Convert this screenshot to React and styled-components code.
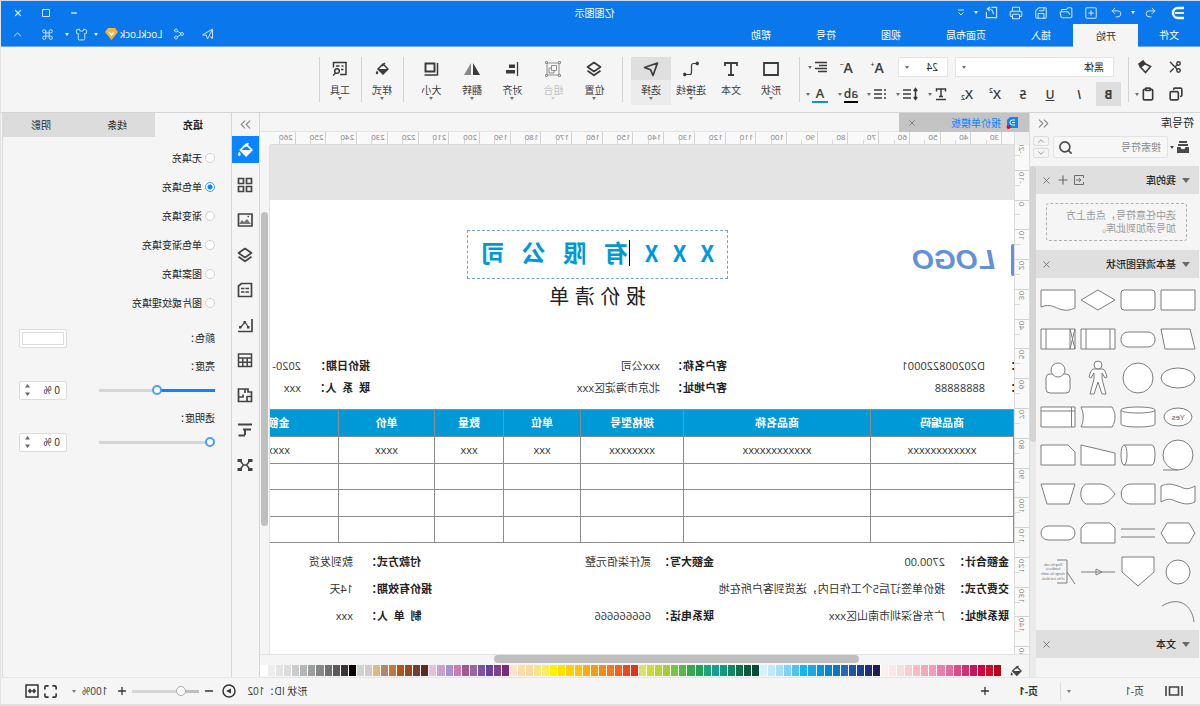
import React, { useState } from "react";
import styled, { createGlobalStyle, css } from "styled-components";
import {
  Undo2,
  Redo2,
  SquarePlus,
  FolderOpen,
  Save,
  Printer,
  Scissors,
  Copy,
  Clipboard,
  Search,
  ChevronUp,
  ChevronDown,
  ChevronsLeft,
  ChevronsRight,
  Shirt,
  Command,
  Plus,
  Minus,
  X,
  Maximize,
  Share2,
} from "lucide-react";

const GlobalStyle = createGlobalStyle`
  * {
    box-sizing: border-box;
  }
  body {
    margin: 0;
    background: #fff;
    color: #222;
    font-family: "Open Sans", "Noto Sans CJK SC", sans-serif;
    font-size: 10px;
    line-height: 12px;
  }
  button, input, select {
    font: inherit;
    color: inherit;
    margin: 0;
  }
  button {
    padding: 0;
    border: 0;
    background: none;
    display: flex;
    align-items: center;
    justify-content: center;
  }
  svg {
    display: block;
    flex: none;
  }
`;

// the whole window is shown flipped left to right
const Window = styled.div`
  transform: scaleX(-1);
  display: flex;
  flex-direction: column;
  height: 100vh;
  min-height: 640px;
  overflow: hidden;
  border-top: 1px solid #c9dcf3;
  border-right: 1px solid #e4e4e4;
  background: #f5f5f5;
`;

const Header = styled.header`
  background: #0a78ec;
  color: #fff;
  border-bottom: 1px solid #6aa9ee;
`;
const TitleBar = styled.div`
  display: grid;
  grid-template-columns: 1fr auto 1fr;
  align-items: center;
  height: 23px;
  padding: 0 3px 0 15px;
  svg {
    color: #cfe5ff;
  }
`;
const QuickTools = styled.div`
  display: flex;
  align-items: center;
  > svg {
    margin-right: 6px;
  }
`;
const WindowTools = styled.div`
  display: flex;
  justify-content: flex-end;
`;
const Cell = styled.button`
  width: ${(p) => p.$w || 25}px;
  height: 20px;
`;
const CaretCell = styled.button`
  width: ${(p) => p.$w || 9}px;
  height: 20px;
`;
const Title = styled.h1`
  margin: 0;
  font-size: 10px;
  font-weight: 400;
`;
const MenuBar = styled.nav`
  display: flex;
  align-items: stretch;
  height: 22px;
  padding-right: 3px;
  svg {
    color: #cfe5ff;
  }
`;
const MenuTab = styled.button`
  padding: 0 23px 0 22px;
  &:first-child {
    padding: 0 21px;
  }
  ${(p) =>
    p.$active &&
    css`
      background: #f5f5f5;
      color: #333;
      margin-bottom: -1px;
    `}
`;
const MenuTools = styled.div`
  display: flex;
  align-items: center;
  margin-left: auto;
  padding-bottom: 2px;
`;
const UserName = styled.button`
  gap: 2px;
  margin: 0 4px 0 2px;
`;

const Caret = styled.i`
  flex: none;
  border: ${(p) => p.$size || 2}px solid transparent;
  border-top: ${(p) => (p.$size || 2) + 1}px solid currentColor;
  border-bottom: 0;
`;

const Ribbon = styled.div`
  display: flex;
  height: 66px;
  padding: 8px 0 0 10px;
  border-bottom: 1px solid #d4d4d4;
  color: #3b3b3b;
  ${Caret} {
    color: #6e6e6e;
  }
`;
const Divider = styled.span`
  width: 1px;
  height: 45px;
  margin: 2px ${(p) => p.$right || 0}px 0 ${(p) => p.$left || 0}px;
  background: #d2d2d2;
`;
const ToolGrid = styled.div`
  display: flex;
  flex-direction: column;
  gap: 3px;
  padding-left: ${(p) => p.$left || 0}px;
`;
const ToolRow = styled.div`
  display: flex;
  align-items: center;
  height: 24px;
`;
const Tool = styled.button`
  width: ${(p) => p.$w || 28}px;
  height: 24px;
  gap: 2px;
  ${(p) =>
    p.$active &&
    css`
      background: #dedede;
    `}
`;
const Field = styled.label`
  display: flex;
  align-items: center;
  position: relative;
  width: ${(p) => p.$w}px;
  height: 20px;
  margin-left: 7px;
  background: #fff;
  border: 1px solid #e4e4e4;
  select {
    appearance: none;
    width: 100%;
    height: 18px;
    padding: 0 16px 0 ${(p) => p.$indent}px;
    border: 0;
    background: none;
    color: #222;
  }
  ${Caret} {
    position: absolute;
    right: 6px;
  }
`;
const BigTools = styled.div`
  display: flex;
  padding: 2px 0 0 ${(p) => p.$left || 0}px;
`;
const BigTool = styled.button`
  flex-direction: column;
  justify-content: flex-start;
  width: ${(p) => p.$w || 40}px;
  height: 48px;
  color: ${(p) => (p.$off ? "#c2c2c2" : "inherit")};
  background: ${(p) => (p.$active ? "#ececec" : "none")};
  span {
    display: flex;
    align-items: center;
    justify-content: center;
    width: 100%;
    height: 23px;
    margin-bottom: 4px;
    background: ${(p) => (p.$active ? "#dfdfdf" : "none")};
  }
  ${Caret} {
    margin-top: 1px;
    ${(p) => p.$off && "color: #cfcfcf;"}
  }
`;

const Body = styled.div`
  display: flex;
  flex: 1;
  min-height: 0;
  padding-left: 1px;
`;

/* symbol library */
const Library = styled.aside`
  display: flex;
  flex-direction: column;
  width: 170px;
  flex: none;
  overflow: hidden;
  border-right: 1px solid #dcdcdc;
`;
const LibraryTitle = styled.div`
  display: flex;
  align-items: center;
  justify-content: space-between;
  height: 20px;
  padding: 0 5px;
  font-size: 11px;
  svg {
    color: #8a8a8a;
  }
`;
const SearchRow = styled.div`
  display: flex;
  align-items: center;
  height: 22px;
  margin: 3px 3px 8px 9px;
  color: #4a4a4a;
  > ${Caret} {
    margin-left: 2px;
  }
`;
const SearchBox = styled.label`
  display: flex;
  align-items: center;
  flex: 1;
  min-width: 0;
  height: 22px;
  margin: 0 4px 0 2px;
  padding: 0 4px 0 6px;
  border: 1px solid #e2e2e2;
  border-radius: 2px;
  background: #f7f7f7;
  input {
    flex: 1;
    min-width: 0;
    border: 0;
    padding: 0;
    background: none;
    outline: 0;
    &::placeholder {
      color: #8a8a8a;
    }
  }
  svg {
    transform: scaleX(-1);
  }
`;
const Stepper = styled.div`
  display: flex;
  flex-direction: column;
  gap: 2px;
  color: #888;
  button {
    width: 16px;
    height: 10px;
    border: 1px solid #dcdcdc;
    border-radius: 2px;
  }
`;
const LibraryBody = styled.div`
  display: flex;
  flex: 1;
  min-height: 0;
`;
const LibraryList = styled.div`
  display: flex;
  flex-direction: column;
  flex: 1;
`;
const SectionHead = styled.h2`
  display: flex;
  align-items: center;
  gap: 6px;
  flex: none;
  height: 28px;
  margin: 0;
  padding: 0 5px 0 9px;
  background: #dfdfdf;
  color: #222;
  font-size: 10px;
  font-weight: 500;
  svg,
  ${Caret} {
    color: #6a6a6a;
  }
  div {
    display: flex;
    gap: 4px;
    margin-left: auto;
  }
`;
const DropHint = styled.p`
  margin: 9px 10px 9px 12px;
  padding: 5px 10px;
  height: 38px;
  border: 1px dashed #b0b0b0;
  border-radius: 3px;
  color: #999;
  line-height: 13px;
`;
const ShapeGrid = styled.div`
  display: grid;
  grid-template-columns: repeat(4, 1fr);
  grid-template-rows: repeat(9, 1fr);
  flex: 1;
  min-height: 0;
  padding: 3px 2px 0 1px;
`;
const ShapeButton = styled.button`
  min-height: 0;
  svg {
    fill: #fff;
    stroke: #7d7d7d;
    overflow: visible;
  }
  text {
    fill: #555;
    stroke: none;
  }
`;
const ScrollTrack = styled.div`
  flex: none;
  width: 6px;
  background: #ebebeb;
  div {
    height: 54%;
    background: #d4d4d4;
    border-radius: 3px;
  }
`;
const Rest = styled.div`
  flex: none;
  height: 19px;
`;

/* canvas */
const Workspace = styled.main`
  display: flex;
  flex-direction: column;
  flex: 1;
  min-width: 0;
`;
const TabRow = styled.div`
  display: flex;
  height: 19px;
  border-bottom: 1px solid #e2e2e2;
`;
const DocTab = styled.button`
  gap: 5px;
  width: 130px;
  height: 19px;
  padding: 0 8px 0 10px;
  background: #c4c4c4;
  color: #0a84ff;
  justify-content: flex-start;
  svg:last-child {
    margin-left: auto;
    color: #777;
  }
`;
const RulerRow = styled.div`
  display: flex;
  height: 13px;
  padding-right: 10px;
  background: #f9f9f9;
`;
const Corner = styled.div`
  flex: none;
  width: 15px;
  background: #f1f1f1;
  border-right: 1px solid #e0e0e0;
`;
const HRuler = styled.div`
  flex: 1;
  overflow: hidden;
  border-bottom: 1px solid #dcdcdc;
  > div {
    display: grid;
    grid-template-columns: repeat(24, 1fr);
    height: 13px;
    margin: 0 -5px 0 12px;
  }
  span {
    padding-left: 2px;
    border-left: 1px solid #d2d2d2;
    background: linear-gradient(#d8d8d8, #d8d8d8) 50% 100% / 1px 5px no-repeat;
    color: #808080;
    font-size: 8px;
    line-height: 10px;
  }
`;
const CanvasRow = styled.div`
  display: flex;
  flex: 1;
  min-height: 0;
`;
const VRuler = styled.div`
  flex: none;
  width: 15px;
  overflow: hidden;
  background: #f9f9f9;
  border-right: 1px solid #dcdcdc;
  > div {
    display: grid;
    grid-template-rows: repeat(18, 1fr);
    height: calc(100% + 27px);
    margin-top: -5px;
  }
  span {
    display: flex;
    min-height: 0;
    padding-left: 2px;
    border-top: 1px solid #d2d2d2;
    background: linear-gradient(#d8d8d8, #d8d8d8) 100% 50% / 5px 1px no-repeat;
    color: #808080;
    font-size: 8px;
    line-height: 10px;
  }
  b {
    align-self: flex-start;
    padding-bottom: 1px;
    font-weight: 400;
    writing-mode: vertical-rl;
    transform: rotate(180deg);
  }
`;
const Canvas = styled.div`
  flex: 1;
  min-width: 0;
  overflow: hidden;
  padding-top: 55px;
  background: #e4e4e4;
`;
const VScroll = styled.div`
  flex: none;
  width: 10px;
  padding: 67px 1px 0;
  border-left: 1px solid #e2e2e2;
  div {
    height: 71%;
    border-radius: 4px;
    background: #bfbfbf;
  }
`;
const HScroll = styled.div`
  flex: none;
  height: 10px;
  padding-left: 170px;
  border-top: 1px solid #e2e2e2;
  div {
    width: 61%;
    height: 8px;
    border-radius: 4px;
    background: #bfbfbf;
  }
`;
const PaletteRow = styled.div`
  display: flex;
  align-items: center;
  height: 13px;
  padding-left: 7px;
  color: #444;
`;
const Palette = styled.div`
  display: grid;
  grid-template-columns: repeat(92, 1fr);
  flex: 1;
  height: 11px;
  margin-left: 8px;
`;
const Swatch = styled.button`
  background: ${(p) => p.$c};
  border-left: 1px solid #fff;
`;

/* quotation sheet */
const Sheet = styled.article`
  width: 900px;
  min-height: 100%;
  margin-left: -46px;
  padding-top: 30px;
  background: #fff;
  font-size: 11px;
  line-height: 16px;
`;
const SheetHead = styled.div`
  display: flex;
  align-items: flex-start;
`;
const Brand = styled.div`
  display: flex;
  align-items: center;
  gap: 16px;
  width: 332px;
  height: 32px;
  margin-top: 14px;
  padding-left: 10px;
  color: #6490d8;
  font: italic bold 28px/36px "Liberation Sans", sans-serif;
`;
const BrandMark = styled.span`
  width: 39px;
  height: 32px;
  border-radius: 2px;
  background: #6490d8;
`;
const TitleBlock = styled.div`
  display: flex;
  flex-direction: column;
  align-items: center;
`;
const CompanyName = styled.div`
  display: flex;
  align-items: center;
  justify-content: center;
  gap: 17px;
  width: 261px;
  height: 49px;
  padding-bottom: 6px;
  border: 1px dashed #6fa3dc;
  color: #0099d8;
  font: bold 24px/26px "Noto Sans CJK SC", sans-serif;
  div {
    display: flex;
    gap: 14px;
    font-size: 22px;
  }
`;
const HanChars = styled.div`
  && {
    position: relative;
    gap: 17px;
    font-size: 24px;
  }
  &::before {
    content: "";
    position: absolute;
    left: -2px;
    top: 1px;
    width: 1px;
    height: 26px;
    background: #000;
  }
`;
const SheetTitle = styled.h2`
  margin: 6px 0 0;
  font: 400 20px/24px "Liberation Sans", "Noto Sans CJK SC", sans-serif;
`;
const InfoGrid = styled.dl`
  display: grid;
  grid-template-columns: ${(p) => p.$cols};
  grid-auto-rows: ${(p) => p.$row}px;
  align-items: center;
  margin: ${(p) => p.$top}px 0 0;
  padding-left: ${(p) => p.$left}px;
  white-space: pre;
  dt {
    font-weight: 700;
  }
  dd {
    margin: 0;
    color: #333;
  }
  dt:nth-of-type(3n) {
    ${(p) => p.$end && "text-align: right; padding-right: 13px;"}
  }
`;
const Items = styled.table`
  width: 841px;
  margin-top: 10px;
  border-collapse: collapse;
  table-layout: fixed;
  text-align: center;
  th,
  td {
    height: 27px;
    padding: 0;
    border: 1px solid #8c8c8c;
    color: #333;
  }
  tbody tr:nth-child(even) td {
    height: 26px;
  }
  th {
    background: #0099d8;
    color: #fff;
  }
`;

/* format panel */
const SideBar = styled.div`
  display: flex;
  flex-direction: column;
  align-items: center;
  flex: none;
  width: 29px;
  border: solid #d6d6d6;
  border-width: 0 1px;
  color: #444;
`;
const SideButton = styled.button`
  width: 27px;
  height: ${(p) => p.$h || 27}px;
  margin-bottom: ${(p) => (p.$h ? 0 : 8)}px;
  ${(p) =>
    p.$active &&
    css`
      background: #0a84ff;
      color: #fff;
    `}
  ${(p) =>
    p.$muted &&
    css`
      color: #8a8a8a;
    `}
`;
const Panel = styled.aside`
  flex: none;
  width: 229px;
  margin-right: 1px;
  border-right: 1px solid #dcdcdc;
`;
const PanelTabs = styled.div`
  display: grid;
  grid-template-columns: repeat(3, 1fr);
  height: 24px;
`;
const PanelTab = styled.button`
  background: ${(p) => (p.$active ? "none" : "#dcdcdc")};
  font-weight: ${(p) => (p.$active ? 700 : 400)};
`;
const FillModes = styled.fieldset`
  margin: 6px 0 0;
  padding: 0 0 0 16px;
  border: 0;
  label {
    display: flex;
    align-items: center;
    gap: 3px;
    height: 29px;
  }
  input {
    appearance: none;
    width: 10px;
    height: 10px;
    border: 1px solid #cfcfcf;
    border-radius: 50%;
    background: #fff;
  }
  input:checked {
    border-color: #3d9bff;
    background: radial-gradient(#0a84ff 2px, #fff 3px);
  }
`;
const PanelRow = styled.div`
  display: flex;
  align-items: center;
  justify-content: space-between;
  height: ${(p) => p.$h}px;
  margin-bottom: ${(p) => p.$gap || 0}px;
  padding: 0 16px;
`;
const ColorButton = styled.button`
  width: 48px;
  height: 19px;
  padding: 2px;
  border: 1px solid #dcdcdc;
  border-radius: 2px;
  background: #fff;
  span {
    flex: 1;
    height: 13px;
    border: 1px solid #dcdcdc;
  }
`;
const Range = styled.input`
  appearance: none;
  width: ${(p) => p.$w}px;
  height: 10px;
  background: linear-gradient(
      to right,
      ${(p) => p.$fill} ${(p) => p.value}%,
      #d6d6d6 ${(p) => p.value}%
    )
    center / 100% 3px no-repeat;
  &::-webkit-slider-thumb {
    appearance: none;
    width: 10px;
    height: 10px;
    border: ${(p) => (p.$gray ? "1px solid #aaa" : "2px solid #4a9ff5")};
    border-radius: 50%;
    background: #fff;
  }
`;
const NumberBox = styled.label`
  display: flex;
  align-items: center;
  justify-content: space-between;
  width: 48px;
  height: 19px;
  padding: 0 5px 0 6px;
  border: 1px solid #dcdcdc;
  border-radius: 2px;
  background: #fff;
  input {
    width: 26px;
    padding: 0;
    border: 0;
    background: none;
  }
`;

/* status bar */
const StatusBar = styled.footer`
  display: flex;
  align-items: center;
  flex: none;
  height: 29px;
  border-top: 1px solid #e6e6e6;
  border-bottom: 2px solid #e0e0e0;
  color: #333;
`;
const PagePicker = styled.div`
  display: flex;
  align-items: center;
  width: 140px;
  height: 19px;
  padding: 0 6px 0 17px;
  gap: 21px;
  border-right: 1px solid #dcdcdc;
  ${Caret} {
    margin-left: auto;
    color: #777;
  }
`;
const PageTab = styled.button`
  margin-left: 22px;
  font-weight: 700;
`;
const AddPage = styled.button`
  margin-left: 28px;
`;
const StatusTools = styled.div`
  display: flex;
  align-items: center;
  gap: 4px;
  margin-left: auto;
  padding-right: 24px;
  > ${Caret} {
    margin-right: 10px;
    color: #777;
  }
`;
const ShapeId = styled.span`
  margin-right: 7px;
  white-space: pre;
`;
const PlayButton = styled.button`
  margin-right: 3px;
`;
const ZoomValue = styled.span`
  margin: 0 2px 0 5px;
`;

const tiny = { width: 14, height: 14, viewBox: "0 0 14 14", fill: "none", stroke: "currentColor" };

const AppLogo = () => (
  <svg width="14" height="14" viewBox="0 0 14 14" fill="none">
    <path d="M1 2h6a5 5 0 0 1 0 10H1" stroke="#fff" strokeWidth="2.4" />
    <path d="M1 7h9" stroke="#fff" strokeWidth="1.8" />
  </svg>
);
const Gem = () => (
  <svg width="13" height="12" viewBox="0 0 13 12">
    <path d="M3 0h7l3 4-6.500 8L0 4z" fill="#f9b233" />
    <path d="M4 4l2.500 3L9 4" fill="none" stroke="#fff" strokeWidth="1.400" />
  </svg>
);
const ExportIcon = () => (
  <svg {...tiny} width="13" height="13" strokeWidth="1.200">
    <path d="M7 1.500H1.500v11h11V10M5 9c0-4 2-6 6-6M8.500 1l3 2-2.500 2.500M12.500 6.500V10" />
  </svg>
);
const MoreIcon = () => (
  <svg width="8" height="8" viewBox="0 0 8 8" fill="none" stroke="currentColor">
    <path d="M1 1h6M1.500 3.500L4 6l2.500-2.500" />
  </svg>
);
const SendIcon = () => (
  <svg {...tiny}>
    <path d="M12.500 8L2.500 2v9.500L5 9.500M2.500 2l5 10 1.200-3.800 3.800-.2" />
  </svg>
);
const Brush = () => (
  <svg {...tiny} strokeWidth="1.600">
    <path d="M1.500 6.500l6-3 4 3.500-5 5.500z" />
    <path d="M7 3.500L9 1l4 3-1.500 3z" fill="currentColor" />
  </svg>
);
const Bucket = ({ size = 14 }) => (
  <svg width={size} height={size} viewBox="0 0 14 14">
    <path d="M6 2l5 5-5 5-5-5zM4 1l3 3" fill="none" stroke="currentColor" strokeWidth="1.500" />
    <path d="M1 7h10l-5 5z" fill="currentColor" />
    <path d="M12 8.500c1 1.500 1.200 2 1.200 2.500a1.200 1.200 0 0 1-2.400 0c0-.5.2-1 1.200-2.500z" fill="currentColor" />
  </svg>
);
const LayersIcon = () => (
  <svg width="16" height="16" viewBox="0 0 16 16" fill="none" stroke="currentColor" strokeWidth="1.700" strokeLinejoin="round">
    <path d="M8 1.500L14.500 6 8 10.500 1.500 6zM1.500 9.800L8 14.300l6.500-4.500" />
  </svg>
);
const TextGlyph = styled.span`
  font: ${(p) => p.$weight || 400} ${(p) => p.$size || 13}px/15px "Open Sans", sans-serif;
  font-style: ${(p) => (p.$italic ? "italic" : "normal")};
  text-decoration: ${(p) => p.$line || "none"};
  border-bottom: ${(p) => (p.$bar ? `2px solid ${p.$bar}` : 0)};
  sup,
  sub {
    font-size: 7px;
    line-height: 0;
  }
  sup {
    vertical-align: 6px;
  }
  sub {
    vertical-align: -1px;
  }
`;
const BigLetter = ({ sign }) => (
  <TextGlyph $weight={600} $size={14}>
    A<sup>{sign}</sup>
  </TextGlyph>
);
const TextStyleIcon = () => (
  <svg {...tiny} strokeWidth="1.500">
    <path d="M2.500 4.500V2h9v2.500M7 2v8M5 9.500h4M2 12.500h10" />
  </svg>
);
const AlignIcon = () => (
  <svg {...tiny} strokeWidth="1.600">
    <path d="M1 2.500h12M1 5.500h8M1 8.500h12M1 11.500h9" />
  </svg>
);
const SpacingIcon = () => (
  <svg width="16" height="14" viewBox="0 0 16 14" fill="none" stroke="currentColor" strokeWidth="1.500">
    <path d="M2.500 1.500v11M.8 4l1.700-2.500L4.200 4M.8 10l1.700 2.500L4.200 10M7 3h8M7 7h8M7 11h8" />
  </svg>
);
const ListIcon = () => (
  <svg {...tiny} strokeWidth="1.600">
    <path d="M1 3h2M1 7h2M1 11h2M5 3h8M5 7h8M5 11h8" />
  </svg>
);

const bigIcons = {
  rect: <path d="M1 2h14v12H1z" strokeWidth="1.800" />,
  text: <path d="M2 5V2h12v3M8 2v12M5 14h6" strokeWidth="1.800" />,
  link: (
    <>
      <path d="M2 2.500h3.500a2 2 0 0 1 2 2v7a2 2 0 0 0 2 2H14" strokeWidth="1.200" />
      <circle cx="1.800" cy="2.500" r="1.400" fill="currentColor" />
      <circle cx="14.200" cy="13.500" r="1.400" fill="currentColor" />
    </>
  ),
  pointer: <path d="M1.500 2l13 4.500-6 2.200L6 14.500z" strokeWidth="1.700" strokeLinejoin="round" />,
  group: (
    <path d="M2 2h12v12H2zM.5.5h2v2h-2zM13.500.5h2v2h-2zM.5 13.500h2v2h-2zM13.500 13.500h2v2h-2zM4.500 4.500h5v5h-5zM9.500 7H12v5H7V9.500" strokeWidth="1" stroke="#8c8c8c" />
  ),
  align: (
    <>
      <path d="M2.500 1v14" strokeWidth="1.300" />
      <path d="M5 3.500h6v3.500H5zM5 9h9v3.500H5z" fill="currentColor" stroke="none" />
    </>
  ),
  flip: (
    <>
      <path d="M7 2v12H0z" fill="currentColor" stroke="none" />
      <path d="M9 2v12h7z" fill="#888" stroke="none" />
    </>
  ),
  size: (
    <>
      <path d="M4.500 2.500h9v8h-9z" strokeWidth="1.900" />
      <path d="M1.500 2v12.500M1.500 14h13" strokeWidth="1.500" />
    </>
  ),
  tools: (
    <>
      <path d="M8 13.500H2v-12h12.500v5M4.500 5h2M8.500 5H12M4.500 8.500H7" strokeWidth="1.500" />
      <circle cx="11" cy="10" r="2.300" strokeWidth="1.500" />
      <path d="M12.500 12l2.500 2.500" strokeWidth="1.500" />
    </>
  ),
};
const BigIcon = ({ name }) => (
  <svg width="16" height="16" viewBox="0 0 16 16" fill="none" stroke="currentColor">
    {bigIcons[name]}
  </svg>
);

const sideIcons = [
  ["模板", <path d="M1.500 1.500h5v5h-5zM9.500 1.500h5v5h-5zM1.500 9.500h5v5h-5zM9.500 9.500h5v5h-5z" />],
  [
    "图片",
    <>
      <path d="M1 2h13.500v12H1z" />
      <path d="M2 12l4-5 3 3 2-2 3 4z" fill="#777" stroke="none" />
      <path d="M4 4.500h1.500" />
    </>,
  ],
  ["图层", <path d="M8 1.500L14.500 6 8 10.500 1.500 6zM1.500 9.800L8 14.300l6.500-4.500" strokeLinejoin="round" />],
  ["备注", <path d="M1.500 1.500h10L14.500 4v10.500h-13zM4 6.500h3.500M8.500 6.500H12M4 10h3.500M8.500 10H12" />],
  [
    "图表",
    <>
      <path d="M1 2v12.500h14" />
      <path d="M4.500 10.500L8 5l4.500 5.500" strokeWidth="1.200" />
      <path d="M3.500 9h2.500v2.500H3.500zM7 4h2.500v2.500H7zM11.500 9H14v2.500h-2.500z" fill="currentColor" stroke="none" />
    </>,
  ],
  ["表格", <path d="M1.500 2h13v12.500h-13zM1.500 6h13M1.500 10.200h13M5.800 6v8.500M10.200 6v8.500" strokeWidth="1.500" />],
  ["容器", <path d="M8 2H5v3H1.500v9.500h13V2H8v4M1.500 9.500H6M6 9v5.500M14.500 10H10V7.500" />],
  ["甘特图", <path d="M1 2.500h14M2 7.500h8M8 7.500v5.500M8 13.500h6.500" strokeWidth="2" />],
  [
    "导图",
    <>
      <path d="M3 3.500l3.500 4.500L3 12.500M13 3.500L9.500 8l3.500 4.500M6.500 8h3" strokeWidth="1.500" />
      <path d="M.5 2H5v3H.5zM11 2h4.500v3H11zM.5 11H5v3H.5zM11 11h4.500v3H11z" fill="currentColor" stroke="none" />
    </>,
  ],
];

const shapes = [
  ["矩形", <path d="M1 7h34v20H1z" />],
  ["圆角矩形", <rect x="1" y="7" width="34" height="20" rx="3" />],
  ["菱形", <path d="M18 7l17 10-17 10L1 17z" />],
  ["文档", <path d="M1 7h34v17c-10-4-14 1-20 2.500S6 27 1 25z" />],
  ["数据", <path d="M6 7h29l-4 20H1z" />],
  ["终止", <rect x="1" y="10" width="34" height="15" rx="7" />],
  ["预定义流程", <path d="M1 7h34v20H1zM6 7v20M30 7v20" />],
  ["流程", <path d="M1 7h34v20H1zM6 7v20M30 7v20M1 7l5 20M6 7L1 27" />],
  ["椭圆", <ellipse cx="18" cy="17" rx="17" ry="10" />],
  ["圆形", <circle cx="18" cy="17" r="15" />],
  [
    "人物",
    <>
      <path d="M13 8h10c2 1 3 4 4 8l-2 1-3-5v6l4 15h-4l-4-12-4 12h-4l4-15v-6l-3 5-2-1c1-4 2-7 4-8z" />
      <circle cx="18" cy="4" r="4" />
    </>,
  ],
  [
    "用户",
    <>
      <rect x="6" y="13" width="24" height="19" rx="4" />
      <circle cx="18" cy="9" r="7" />
    </>,
  ],
  [
    "判定",
    <>
      <ellipse cx="18" cy="17" rx="14" ry="9" />
      <text x="18" y="20" fontSize="8" textAnchor="middle">Yes</text>
    </>,
  ],
  ["数据库", <path d="M1 10v14c0 4 34 4 34 0V10c0-4-34-4-34 0c0 4 34 4 34 0" />],
  ["存储数据", <path d="M4 7h31c-3 6-3 14 0 20H4c-4-6-4-14 0-20z" />],
  ["内部存储", <path d="M1 7h34v20H1zM4.500 7v20M1 11h34" />],
  [
    "顺序数据",
    <>
      <circle cx="18" cy="17" r="15" />
      <path d="M18 32h15" />
    </>,
  ],
  ["直接数据", <path d="M32 7H4c-4 0-4 20 0 20h28c4 0 4-20 0-20c-4 0-4 20 0 20" />],
  ["手动输入", <path d="M1 15l34-8v20H1z" />],
  ["卡片", <path d="M8 7h27v20H1V14z" />],
  ["纸带", <path d="M1 9c9 5 11 2 17 0s10-3 17 0v16c-9-5-11-2-17 0s-10 3-17 0z" />],
  ["延期", <path d="M1 7h24c13 0 13 20 0 20H1z" />],
  ["显示", <path d="M1 17c4-5 8-10 15-10h14c7 3 7 17 0 20H16C9 27 5 22 1 17z" />],
  ["手动操作", <path d="M1 7h34l-6 20H7z" />],
  ["准备", <path d="M7 7h22l6 10-6 10H7L1 17z" />],
  ["并行", <path d="M1 13h34M1 21h34" />],
  ["循环限值", <path d="M6 7h24l5 5v15H1V12z" />],
  ["起止", <rect x="1" y="10" width="34" height="14" rx="7" />],
  ["页内引用", <circle cx="18" cy="17" r="12" />],
  ["跨页引用", <path d="M2 2h32v15L18 31 2 17z" />],
  ["箭头", <path d="M1 17h34M14 17l6-3v6z" />],
  [
    "批注",
    <>
      <path d="M19 5H9v23h10M9 17L1 29" fill="none" />
      <text x="23" y="11" fontSize="3" textAnchor="middle">Drag the side</text>
      <text x="23" y="15" fontSize="3" textAnchor="middle">handles to</text>
      <text x="23" y="20" fontSize="3" textAnchor="middle">change the width</text>
      <text x="23" y="25" fontSize="3" textAnchor="middle">of the text block.</text>
    </>,
  ],
  ["弧线", <path d="M2 28C4 10 18 2 34 12" fill="none" />],
];

const palette = [
  "#b90016", "#c8102e", "#d7003a", "#c2185b", "#d0306e", "#dd4b86", "#e86aa0", "#ea7fae",
  "#f19cb8", "#f4a9b8", "#f6bcc6", "#f8cdd2", "#fadcdc", "#fbe8e6", "#fdf0ee", "#1b1f55",
  "#1e2f7c", "#1f3f93", "#1f55a5", "#2767b5", "#0b74c4", "#0086d1", "#0098dc", "#1ea7e4",
  "#18b4ee", "#4cc3f0", "#7fd2f2", "#a3dff5", "#bfe9f7", "#d5f1fa", "#0a4a35", "#0b5a3c",
  "#117047", "#0f8a63", "#14987c", "#11a08f", "#1fa37b", "#1da554", "#33ab4c", "#55b848",
  "#7cc243", "#9fcd3d", "#b6d433", "#cbdc3a", "#dbe26a", "#e2331f", "#e8491f", "#ee6420",
  "#f17a1c", "#f38b17", "#f59c12", "#f8ae10", "#fbc010", "#fdd10a", "#fee000", "#fff000",
  "#f9ee5c", "#fbe38a", "#fbd9a0", "#fddcaa", "#fde5cc", "#7a2c78", "#843f8b", "#68419a",
  "#7a559d", "#9766a3", "#a05c8c", "#cb7bb2", "#a892d0", "#c8a4cc", "#ebbfdb", "#5e2a1a",
  "#763c30", "#914b28", "#aa5724", "#c07a40", "#b2876e", "#e0b884", "#d3cbc5", "#cdd6ce",
  "#000000", "#3c3434", "#5a5a5a", "#707070", "#878787", "#9b9fa0", "#b2b6b6", "#cacccc",
  "#dcdcdc", "#e4e4e4", "#eeeeee", "#ffffff",
];

const columns = [
  ["序号", 46, "x"],
  ["商品编码", 143, "xxxxxxxxxxxx"],
  ["商品名称", 187, "xxxxxxxxxxxx"],
  ["规格型号", 103, "xxxxxxxx"],
  ["单位", 77, "xxx"],
  ["数量", 69, "xxx"],
  ["单价", 96, "xxxx"],
  ["金额", 120, "xxxx"],
];

function Info({ items, ...rest }) {
  return (
    <InfoGrid {...rest}>
      {items.map(([label, value]) => (
        <React.Fragment key={label}>
          <dt>{label && label + "："}</dt>
          <dd>{value}</dd>
        </React.Fragment>
      ))}
    </InfoGrid>
  );
}

function TopBar() {
  return (
    <Header>
      <TitleBar>
        <QuickTools>
          <AppLogo />
          <Cell aria-label="撤销" $w={28}><Undo2 size={13} strokeWidth={1.8} /></Cell>
          <CaretCell aria-label="撤销历史" $w={8}><Caret /></CaretCell>
          <Cell aria-label="重做"><Redo2 size={13} strokeWidth={1.8} /></Cell>
          <Cell aria-label="新建"><SquarePlus size={14} strokeWidth={1.8} /></Cell>
          <Cell aria-label="打开"><FolderOpen size={14} strokeWidth={1.8} /></Cell>
          <Cell aria-label="保存"><Save size={14} strokeWidth={1.8} /></Cell>
          <Cell aria-label="打印"><Printer size={14} strokeWidth={1.8} /></Cell>
          <Cell aria-label="导出"><ExportIcon /></Cell>
          <CaretCell aria-label="导出选项" $w={6}><Caret /></CaretCell>
          <Cell aria-label="更多" $w={24}><MoreIcon /></Cell>
        </QuickTools>
        <Title>亿图图示</Title>
        <WindowTools>
          <Cell aria-label="最小化" $w={28}><Minus size={8} strokeWidth={4} /></Cell>
          <Cell aria-label="最大化" $w={28}>
            <svg width="8" height="8" viewBox="0 0 8 8"><path d="M.5.5h7v7h-7z" fill="none" stroke="currentColor" /></svg>
          </Cell>
          <Cell aria-label="关闭" $w={28}><X size={10} strokeWidth={3} /></Cell>
        </WindowTools>
      </TitleBar>
      <MenuBar>
        {["文件", "开始", "插入", "页面布局", "视图", "符号", "帮助"].map((name) => (
          <MenuTab key={name} $active={name === "开始"}>{name}</MenuTab>
        ))}
        <MenuTools>
          <Cell aria-label="发送" $w={29}><SendIcon /></Cell>
          <Cell aria-label="分享" $w={29}><Share2 size={12} strokeWidth={1.8} /></Cell>
          <UserName>LockLock<Gem /></UserName>
          <CaretCell aria-label="账户"><Caret /></CaretCell>
          <Cell aria-label="主题" $w={20}><Shirt size={13} strokeWidth={1.8} /></Cell>
          <CaretCell aria-label="主题选项"><Caret /></CaretCell>
          <Cell aria-label="应用" $w={31}><Command size={13} strokeWidth={1.8} /></Cell>
          <Cell aria-label="收起" $w={28}><ChevronUp size={13} strokeWidth={1.8} /></Cell>
        </MenuTools>
      </MenuBar>
    </Header>
  );
}

function RibbonBar() {
  return (
    <Ribbon>
      <ToolGrid>
        <ToolRow>
          <Tool aria-label="剪切" $w={29}><Scissors size={14} strokeWidth={2.4} /></Tool>
          <Tool aria-label="格式刷" $w={32}><Brush /></Tool>
        </ToolRow>
        <ToolRow>
          <Tool aria-label="复制" $w={28}><Copy size={14} strokeWidth={2.8} /></Tool>
          <Tool aria-label="粘贴" $w={33}><Clipboard size={14} strokeWidth={2.8} /><Caret /></Tool>
        </ToolRow>
      </ToolGrid>
      <Divider />
      <ToolGrid $left={7}>
        <ToolRow>
          <Field $w={159} $indent={9}>
            <select aria-label="字体"><option>黑体</option></select>
            <Caret />
          </Field>
          <Field $w={50} $indent={9}>
            <select aria-label="字号"><option>24</option></select>
            <Caret />
          </Field>
          <Tool aria-label="增大字号" $w={42}><BigLetter sign="+" /></Tool>
          <Tool aria-label="减小字号" $w={20}><BigLetter sign="−" /></Tool>
          <Tool aria-label="对齐方式" $w={36}><AlignIcon /><Caret /></Tool>
        </ToolRow>
        <ToolRow>
          <Tool aria-label="加粗" $w={25} $active><TextGlyph $weight={700} $size={12}>B</TextGlyph></Tool>
          <Tool aria-label="斜体" $w={33}><TextGlyph $weight={600} $size={12} $italic>I</TextGlyph></Tool>
          <Tool aria-label="下划线" $w={26}><TextGlyph $weight={600} $size={12} $line="underline">U</TextGlyph></Tool>
          <Tool aria-label="删除线"><TextGlyph $weight={600} $size={12} $line="line-through">S</TextGlyph></Tool>
          <Tool aria-label="上标"><TextGlyph $weight={600}>X<sup>2</sup></TextGlyph></Tool>
          <Tool aria-label="下标"><TextGlyph $weight={600}>X<sub>2</sub></TextGlyph></Tool>
          <Tool aria-label="文字方向" $w={30}><TextStyleIcon /><Caret /></Tool>
          <Tool aria-label="行距" $w={32}><SpacingIcon /><Caret /></Tool>
          <Tool aria-label="项目符号" $w={28}><ListIcon /><Caret /></Tool>
          <Tool aria-label="突出显示" $w={30}><TextGlyph $weight={600} $size={12} $bar="#000">ab</TextGlyph><Caret /></Tool>
          <Tool aria-label="字体颜色" $w={32}><TextGlyph $weight={600} $bar="#0099d8">&nbsp;A&nbsp;</TextGlyph><Caret /></Tool>
        </ToolRow>
      </ToolGrid>
      <Divider />
      <BigTools $left={8}>
        <BigTool><span><BigIcon name="rect" /></span>形状<Caret /></BigTool>
        <BigTool><span><BigIcon name="text" /></span>文本</BigTool>
        <BigTool><span><BigIcon name="link" /></span>连接线<Caret /></BigTool>
        <BigTool $active><span><BigIcon name="pointer" /></span>选择<Caret /></BigTool>
      </BigTools>
      <Divider $left={8} />
      <BigTools $left={7}>
        <BigTool $w={41}><span><LayersIcon /></span>位置<Caret /></BigTool>
        <BigTool $w={41} $off><span><BigIcon name="group" /></span>组合<Caret /></BigTool>
        <BigTool $w={41}><span><BigIcon name="align" /></span>对齐<Caret /></BigTool>
        <BigTool $w={40}><span><BigIcon name="flip" /></span>翻转<Caret /></BigTool>
        <BigTool $w={41}><span><BigIcon name="size" /></span>大小<Caret /></BigTool>
      </BigTools>
      <Divider $left={7} />
      <BigTools $left={1}>
        <BigTool><span><Bucket /></span>样式<Caret /></BigTool>
      </BigTools>
      <Divider />
      <BigTools $left={1}>
        <BigTool><span><BigIcon name="tools" /></span>工具<Caret /></BigTool>
      </BigTools>
      <Divider />
    </Ribbon>
  );
}

function SymbolLibrary() {
  return (
    <Library>
      <LibraryTitle>
        符号库
        <button aria-label="收起符号库"><ChevronsLeft size={17} strokeWidth={1.6} /></button>
      </LibraryTitle>
      <SearchRow>
        <svg width="14" height="14" viewBox="0 0 14 14" fill="currentColor">
          <path d="M3 1h8v2H3zM2 4h10v2H2zM1 7h3.500c0 3 5 3 5 0H13v6H1z" />
        </svg>
        <Caret />
        <SearchBox>
          <input type="text" aria-label="搜索符号" placeholder="搜索符号" />
          <Search size={15} strokeWidth={2.6} />
        </SearchBox>
        <Stepper>
          <button aria-label="上一个"><ChevronUp size={10} /></button>
          <button aria-label="下一个"><ChevronDown size={10} /></button>
        </Stepper>
      </SearchRow>
      <LibraryBody>
        <LibraryList>
          <SectionHead>
            <Caret $size={4} />我的库
            <div>
              <button aria-label="导入"><svg width="10" height="10" viewBox="0 0 10 10" fill="none" stroke="currentColor"><path d="M.5 3V.5h9v9h-9V7M8 5H3M5 3L3 5l2 2" /></svg></button>
              <button aria-label="新建符号"><Plus size={14} /></button>
              <button aria-label="关闭我的库"><X size={11} strokeWidth={1.8} /></button>
            </div>
          </SectionHead>
          <DropHint>选中任意符号，点击上方<br />加号添加到此库。</DropHint>
          <SectionHead>
            <Caret $size={4} />基本流程图形状
            <div><button aria-label="关闭基本流程图形状"><X size={11} strokeWidth={1.8} /></button></div>
          </SectionHead>
          <ShapeGrid>
            {shapes.map(([name, drawing]) => (
              <ShapeButton key={name} aria-label={name}>
                <svg width="36" height="34" viewBox="0 0 36 34">{drawing}</svg>
              </ShapeButton>
            ))}
          </ShapeGrid>
          <SectionHead>
            <Caret $size={4} />文本
            <div><button aria-label="关闭文本"><X size={11} strokeWidth={1.8} /></button></div>
          </SectionHead>
          <Rest />
        </LibraryList>
        <ScrollTrack><div /></ScrollTrack>
      </LibraryBody>
    </Library>
  );
}

function Quotation() {
  return (
    <Sheet>
      <SheetHead>
        <Brand><BrandMark />LOGO</Brand>
        <TitleBlock>
          <CompanyName>
            <div><span>X</span><span>X</span><span>X</span></div>
            <HanChars><span>有</span><span>限</span><span>公</span><span>司</span></HanChars>
          </CompanyName>
          <SheetTitle>报 价 清 单</SheetTitle>
        </TitleBlock>
      </SheetHead>
      <Info
        $cols="75px 258px 67px 290px 69px 1fr"
        $row={22}
        $top={46}
        $left={0}
        items={[
          ["报价单号", "D202008220001"],
          ["客户名称", "xxx公司"],
          ["报价日期", "2020-"],
          ["联系电话", "88888888"],
          ["客户地址", "北京市海淀区xxx"],
          ["联  系  人", "xxx"],
        ]}
      />
      <Items>
        <colgroup>
          {columns.map(([name, w]) => <col key={name} width={w} />)}
        </colgroup>
        <thead>
          <tr>{columns.map(([name]) => <th key={name}>{name}</th>)}</tr>
        </thead>
        <tbody>
          <tr>{columns.map(([name, , value]) => <td key={name}>{value}</td>)}</tr>
          {[1, 2, 3].map((row) => (
            <tr key={row}>{columns.map(([name]) => <td key={name} />)}</tr>
          ))}
        </tbody>
      </Items>
      <Info
        $cols="64px 231px 63px 219px 79px 1fr"
        $row={27}
        $top={5}
        $left={51}
        $end
        items={[
          ["金额合计", "2700.00"],
          ["金额大写", "贰仟柒佰元整"],
          ["付款方式", "款到发货"],
          ["交费方式", "报价单签订后5个工作日内，送货到客户所在地"],
          ["", ""],
          ["报价有效期", "14天"],
          ["联系地址", "广东省深圳市南山区xxx"],
          ["联系电话", "666666666"],
          ["制  单  人", "xxx"],
        ]}
      />
    </Sheet>
  );
}

function Editor() {
  return (
    <Workspace>
      <TabRow>
        <DocTab>
          <svg width="13" height="13" viewBox="0 0 13 13">
            <path d="M1 1h8l3 3v8H1z" fill="#0a84ff" />
            <path d="M4 4h2.500a2.500 2.500 0 0 1 0 5H4M4 6.500h3" fill="none" stroke="#fff" />
            <circle cx="10.500" cy="11" r="2" fill="#f00" />
          </svg>
          报价单模板
          <X size={10} strokeWidth={2} />
        </DocTab>
      </TabRow>
      <RulerRow>
        <Corner />
        <HRuler>
          <div>
            {Array.from({ length: 24 }, (_, i) => <span key={i}>{30 + i * 10}</span>)}
          </div>
        </HRuler>
      </RulerRow>
      <CanvasRow>
        <VRuler>
          <div>
            {Array.from({ length: 18 }, (_, i) => <span key={i}><b>{i * 10 - 20}</b></span>)}
          </div>
        </VRuler>
        <Canvas><Quotation /></Canvas>
        <VScroll><div /></VScroll>
      </CanvasRow>
      <HScroll><div /></HScroll>
      <PaletteRow>
        <Bucket size={12} />
        <Palette>
          {palette.map((c, i) => <Swatch key={i} $c={c} aria-label={c} />)}
        </Palette>
      </PaletteRow>
    </Workspace>
  );
}

function Amount({ label, value, onChange, number }) {
  return (
    <>
      <PanelRow $h={14}>{label}：</PanelRow>
      <PanelRow $h={34} $gap={4}>
        <Range type="range" aria-label={label} $w={116} $fill="#0a84ff" value={value} onChange={(e) => onChange(+e.target.value)} />
        <NumberBox>
          <input type="text" aria-label={label + "数值"} defaultValue={number} />
          <svg width="5" height="12" viewBox="0 0 5 12" fill="#666"><path d="M0 3.500L2.500 0 5 3.500zM0 8.500L2.500 12 5 8.500z" /></svg>
        </NumberBox>
      </PanelRow>
    </>
  );
}

function FormatPanel() {
  const [mode, setMode] = useState("单色填充");
  const [light, setLight] = useState(50);
  const [alpha, setAlpha] = useState(0);
  return (
    <Panel>
      <PanelTabs>
        <PanelTab $active>填充</PanelTab>
        <PanelTab>线条</PanelTab>
        <PanelTab>阴影</PanelTab>
      </PanelTabs>
      <FillModes>
        {["无填充", "单色填充", "渐变填充", "单色渐变填充", "图案填充", "图片或纹理填充"].map((name) => (
          <label key={name}>
            <input type="radio" name="fill" checked={mode === name} onChange={() => setMode(name)} />
            {name}
          </label>
        ))}
      </FillModes>
      <PanelRow $h={42}>
        颜色：
        <ColorButton aria-label="颜色"><span /></ColorButton>
      </PanelRow>
      <Amount label="亮度" value={light} onChange={setLight} number="0 %" />
      <Amount label="透明度" value={alpha} onChange={setAlpha} number="0 %" />
    </Panel>
  );
}

function Footer() {
  const [zoom, setZoom] = useState(23);
  return (
    <StatusBar>
      <PagePicker>
        <svg width="18" height="12" viewBox="0 0 18 12" fill="none" stroke="#444" strokeWidth="1.600">
          <path d="M4.500 2h9v8h-9zM1 1v10M17 1v10" />
        </svg>
        页-1
        <Caret />
      </PagePicker>
      <PageTab>页-1</PageTab>
      <AddPage aria-label="添加页"><Plus size={12} strokeWidth={2.6} /></AddPage>
      <StatusTools>
        <ShapeId>形状 ID：102</ShapeId>
        <PlayButton aria-label="演示">
          <svg {...tiny} strokeWidth="1.500"><circle cx="7" cy="7" r="6" /><path d="M5 4.500L10 7l-5 2.500z" fill="currentColor" stroke="none" /></svg>
        </PlayButton>
        <button aria-label="缩小"><Minus size={12} strokeWidth={3} /></button>
        <Range type="range" aria-label="缩放" $w={67} $fill="#bdbdbd" $gray value={zoom} onChange={(e) => setZoom(+e.target.value)} />
        <button aria-label="放大"><Plus size={12} strokeWidth={2.6} /></button>
        <ZoomValue>100%</ZoomValue>
        <Caret />
        <button aria-label="全屏"><Maximize size={15} strokeWidth={2.6} /></button>
        <button aria-label="适合宽度">
          <svg {...tiny} strokeWidth="1.500"><path d="M1 1h12v12H1zM4 7h6M5.500 5L3.800 7l1.700 2M8.500 5l1.700 2-1.700 2" /></svg>
        </button>
      </StatusTools>
    </StatusBar>
  );
}

function App() {
  return (
    <>
      <GlobalStyle />
      <Window>
        <TopBar />
        <RibbonBar />
        <Body>
          <SymbolLibrary />
          <Editor />
          <SideBar>
            <SideButton aria-label="展开面板" $h={23} $muted><ChevronsRight size={17} strokeWidth={1.6} /></SideButton>
            <SideButton aria-label="填充" $active><Bucket size={16} /></SideButton>
            {sideIcons.map(([name, drawing]) => (
              <SideButton key={name} aria-label={name}>
                <svg width="16" height="16" viewBox="0 0 16 16" fill="none" stroke="currentColor" strokeWidth="1.700">
                  {drawing}
                </svg>
              </SideButton>
            ))}
          </SideBar>
          <FormatPanel />
        </Body>
        <Footer />
      </Window>
    </>
  );
}

export default App;
